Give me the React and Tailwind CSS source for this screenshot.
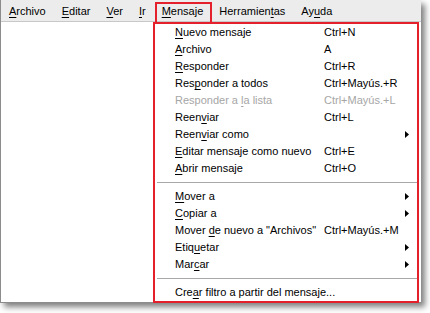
const font = { fontFamily: '"Liberation Sans", Arial, sans-serif' };

function Mn({ text, u }) {
    if (u === undefined) return <span>{text}</span>;
    return (
        <span>
            {text.slice(0, u)}
            <span className="underline underline-offset-[2px]">{text[u]}</span>
            {text.slice(u + 1)}
        </span>
    );
}

const bar = [
    { t: 'Archivo', u: 0 },
    { t: 'Editar', u: 0 },
    { t: 'Ver', u: 0 },
    { t: 'Ir', u: 0 },
    { t: 'Mensaje', u: 0, open: true },
    { t: 'Herramientas', u: 9 },
    { t: 'Ayuda', u: 2 },
];

const groups = [
    [
        { t: 'Nuevo mensaje', u: 0, k: 'Ctrl+N' },
        { t: 'Archivo', u: 0, k: 'A' },
        { t: 'Responder', u: 0, k: 'Ctrl+R' },
        { t: 'Responder a todos', u: 3, k: 'Ctrl+Mayús.+R' },
        { t: 'Responder a la lista', u: 12, k: 'Ctrl+Mayús.+L', off: true },
        { t: 'Reenviar', u: 4, k: 'Ctrl+L' },
        { t: 'Reenviar como', u: 4, sub: true },
        { t: 'Editar mensaje como nuevo', u: 0, k: 'Ctrl+E' },
        { t: 'Abrir mensaje', u: 0, k: 'Ctrl+O' },
    ],
    [
        { t: 'Mover a', u: 0, sub: true },
        { t: 'Copiar a', u: 0, sub: true },
        { t: 'Mover de nuevo a "Archivos"', u: 6, k: 'Ctrl+Mayús.+M' },
        { t: 'Etiquetar', u: 4, sub: true },
        { t: 'Marcar', u: 3, sub: true },
    ],
    [{ t: 'Crear filtro a partir del mensaje...', u: 3 }],
];

function Arrow() {
    return (
        <svg width="4" height="7" viewBox="0 0 4 7" className="block">
            <path d="M0 0 L4 3.5 L0 7 Z" fill="#000" />
        </svg>
    );
}

function Row({ item }) {
    return (
        <div className={`flex h-[17px] items-center pl-[20px] pr-[8px] whitespace-nowrap ${item.off ? 'text-[#a6a6a6]' : 'text-black'}`}>
            <div className="w-[149px] shrink-0"><Mn text={item.t} u={item.u} /></div>
            <div className="flex-1">{item.k}</div>
            {item.sub && <Arrow />}
        </div>
    );
}

export default function App() {
    return (
        <div className="w-[430px] h-[313px] bg-white overflow-hidden text-[11px] leading-none" style={font}>
            <div className="relative w-[421px] h-[303px] bg-white border-l border-b border-[#8c8c8c] shadow-[4px_4px_6px_rgba(0,0,0,0.5)]">

                {/* --- MENU BAR --- */}
                <div className="flex h-[22px] bg-[#ececec] border-b border-[#c8c8c8] pt-[2px]">
                    {bar.map((b) => (
                        <div key={b.t} className="relative flex items-center px-2 text-black">
                            <Mn text={b.t} u={b.u} />
                            {b.open && (
                                <span className="absolute left-[1px] right-[-1px] top-0 -bottom-[3px] border-2 border-[#e3202b]" />
                            )}
                        </div>
                    ))}
                </div>

                {/* --- DROPDOWN --- */}
                <div className="absolute left-[152px] top-[22px] w-[266px] h-[281px] bg-white border-2 border-[#e3202b]">
                    {groups.map((g, gi) => (
                        <div key={gi}>
                            {gi > 0 && (
                                <div className="h-[11px] flex items-center pl-[2px]">
                                    <div className="h-px w-full bg-[#a8a8a8]" />
                                </div>
                            )}
                            {g.map((item) => <Row key={item.t} item={item} />)}
                        </div>
                    ))}
                </div>
            </div>
        </div>
    );
}
